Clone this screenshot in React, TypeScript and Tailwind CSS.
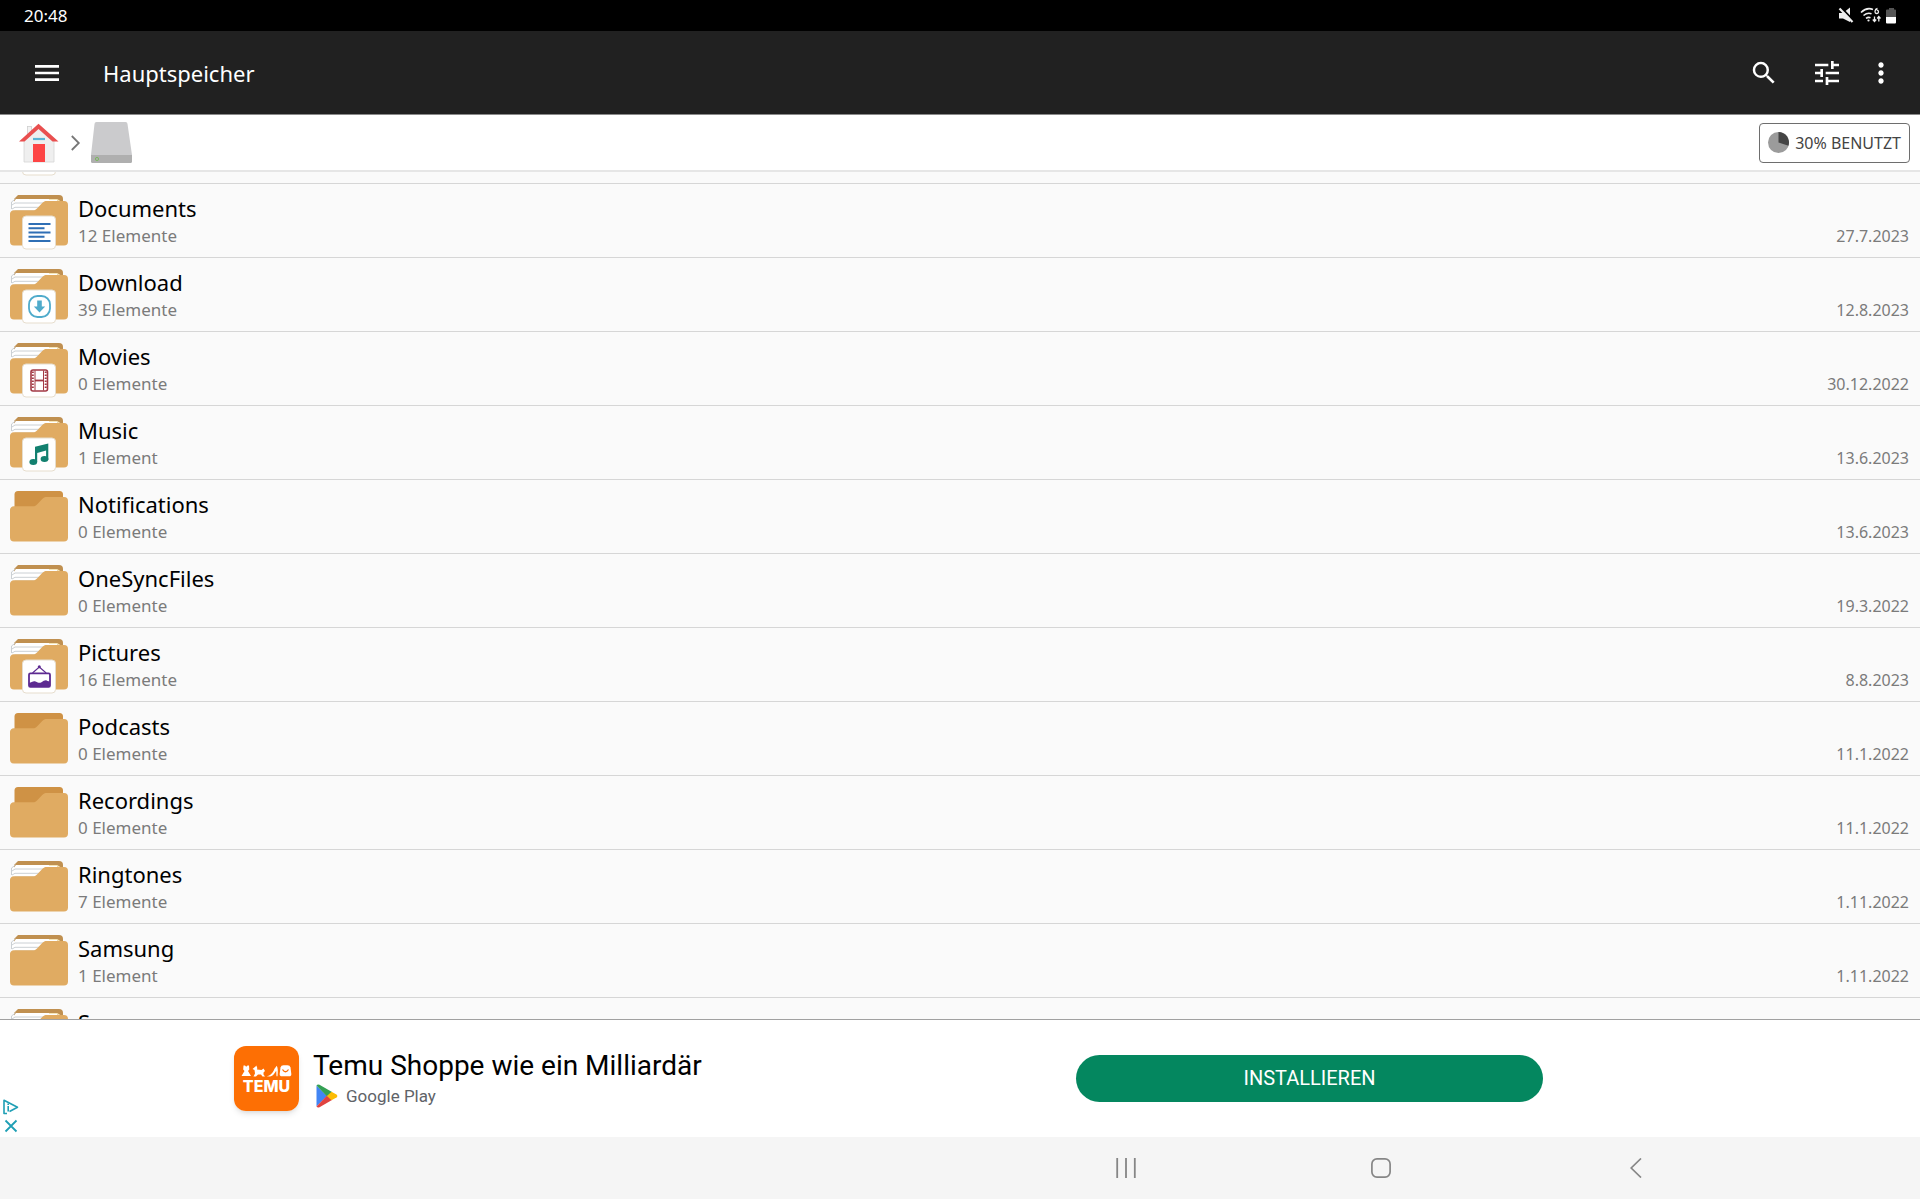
import { ReactNode } from 'react'
import { MdMenu, MdMoreVert, MdSearch, MdTune } from 'react-icons/md'

type Badge = 'documents' | 'download' | 'movies' | 'music' | 'pictures' | 'blank'

type Folder = {
  name: string
  count: string
  date: string
  filled?: boolean
  badge?: Badge
}

const folders: Folder[] = [
  { name: '', count: '', date: '', filled: true, badge: 'blank' },
  { name: 'Documents', count: '12 Elemente', date: '27.7.2023', filled: true, badge: 'documents' },
  { name: 'Download', count: '39 Elemente', date: '12.8.2023', filled: true, badge: 'download' },
  { name: 'Movies', count: '0 Elemente', date: '30.12.2022', filled: true, badge: 'movies' },
  { name: 'Music', count: '1 Element', date: '13.6.2023', filled: true, badge: 'music' },
  { name: 'Notifications', count: '0 Elemente', date: '13.6.2023' },
  { name: 'OneSyncFiles', count: '0 Elemente', date: '19.3.2022', filled: true },
  { name: 'Pictures', count: '16 Elemente', date: '8.8.2023', filled: true, badge: 'pictures' },
  { name: 'Podcasts', count: '0 Elemente', date: '11.1.2022' },
  { name: 'Recordings', count: '0 Elemente', date: '11.1.2022' },
  { name: 'Ringtones', count: '7 Elemente', date: '1.11.2022', filled: true },
  { name: 'Samsung', count: '1 Element', date: '1.11.2022', filled: true },
  { name: 'S', count: '', date: '', filled: true },
]

// drawn inside a 34x34 card
const badges: Record<Badge, ReactNode> = {
  blank: null,
  documents: (
    <path
      d="M6.5 8.500h22M6.500 12.700h16M6.500 17h22M6.500 21.200h16M6.500 25.500h22"
      stroke="#2f6fb5"
      strokeWidth="1.9"
    />
  ),
  download: (
    <g>
      <rect x="7" y="6.5" width="21" height="21" rx="8.5" fill="none" stroke="#4fabcb" strokeWidth="1.8" />
      <path d="M15.2 11h4.600v6h3.400L17.500 23l-5.700-6h3.400z" fill="#4fabcb" />
    </g>
  ),
  movies: (
    <g fill="none" stroke="#a33a45">
      <rect x="9" y="6.5" width="16.500" height="21" rx="2" strokeWidth="1.6" />
      <path d="M13 7v20M21.500 7v20" strokeWidth="1" />
      <path d="M13 17h9" strokeWidth="1.8" />
      <path d="M10.800 8v18M23.700 8v18" strokeWidth="2" strokeDasharray="1.4 1.6" />
    </g>
  ),
  music: (
    <g fill="#12806f">
      <path d="M13 9.200 26.300 6v16.500h-2.200v-9.500l-8.900 2.500v9H13z" />
      <ellipse cx="11.300" cy="24.500" rx="3.900" ry="3" />
      <ellipse cx="22.500" cy="21.500" rx="3.900" ry="3" />
    </g>
  ),
  pictures: (
    <g>
      <path d="M10.500 13.500 17.300 7.500l6.900 6" fill="none" stroke="#5d2a91" strokeWidth="1.1" />
      <circle cx="17.300" cy="7.200" r="1.500" fill="#5d2a91" />
      <rect x="7" y="13.800" width="21" height="13.500" rx="1.400" fill="none" stroke="#5d2a91" strokeWidth="1.8" />
      <path d="M7 23.500c2.500-.4 4-2.400 6.500-1.600 2.600.9 3.500 2.200 6 .8 2.200-1.300 4.500-2.700 6-1.200l2.500.5v5.300H7z" fill="#5d2a91" />
    </g>
  ),
}

function FolderIcon({ filled, badge }: { filled?: boolean; badge?: Badge }) {
  return (
    <svg width="58" height="51" viewBox="0 0 58 51" className="overflow-visible shrink-0" aria-hidden="true">
      {filled ? (
        <g>
          <path d="M8 0h41a4 4 0 0 1 4 4v6H4V4z" fill="#c09050" />
          <path d="M6 4h40l4 4v28H2V9z" fill="#fff" />
          <path
            d="M1.500 14V7l4-3M2 10l3-2h33M2 14l3-1.700h29M5 16h22"
            fill="none"
            stroke="#cbd0d4"
            strokeWidth="1"
          />
          <path d="M39 4.500h8l3 2" fill="none" stroke="#f5e6b8" strokeWidth="1.2" />
        </g>
      ) : (
        <path d="M8 0h41.500A3.500 3.500 0 0 1 53 3.500V20H4.500V3.500A3.500 3.500 0 0 1 8 0z" fill="#cf9245" />
      )}
      <path
        d="M4 15.300h19c2 0 3-.8 4.500-2.300l4.500-4.800c1.500-1.600 2.800-2.200 5-2.200h17a4 4 0 0 1 4 4v36.500a4 4 0 0 1-4 4H4a4 4 0 0 1-4-4V19a3.700 3.700 0 0 1 4-3.700z"
        fill="#e0ab62"
      />
      {badge && (
        <g transform="translate(12 20.500)">
          <rect x=".5" y=".5" width="33" height="33" rx="3.5" fill="#fff" stroke="#e6ddcd" />
          {badges[badge]}
        </g>
      )}
    </svg>
  )
}

function StatusBar() {
  return (
    <div className="flex h-[31px] shrink-0 items-center justify-between bg-black px-6 text-white">
      <span className="text-[17px] leading-6">20:48</span>
      <svg width="58" height="18" viewBox="0 0 58 18" aria-hidden="true">
        <path d="M1 6h4L12 .5v14.500L5 11.500H1z" fill="#eee" />
        <path d="M2.500 0 16 14" stroke="#000" strokeWidth="2" />
        <path d="m1.500 1.500 13 13.500" stroke="#eee" strokeWidth="2.2" />
        <g fill="none" stroke="#eee" strokeWidth="1.6">
          <path d="M23 5.500c4-4 8.500-4.500 12-3" />
          <path d="M25.500 8.500c3-2.500 5.500-2.800 8-1.800" />
          <path d="M28 11.300c1.500-1 3-1.200 4.500-.5" />
          <path d="M39.500 1.500c-3 .5-3.300 5-.8 5s2.300-3.300 0-3.300" strokeWidth="1.3" />
          <path d="M36.500 9.500v5M34.800 12.500l1.700 2 1.700-2M40.800 14.500v-5M39.200 11.500l1.600-2 1.700 2" strokeWidth="1.3" />
        </g>
        <circle cx="30.500" cy="13.500" r="1.100" fill="#eee" />
        <path d="M48 3.500a1 1 0 0 1 1-1h2V1h5v1.500h1a1 1 0 0 1 1 1V10H48z" fill="#555" />
        <path d="M48 10h10v5.500a1 1 0 0 1-1 1h-8a1 1 0 0 1-1-1z" fill="#fff" />
      </svg>
    </div>
  )
}

function AppBar() {
  return (
    <header className="flex h-[84px] shrink-0 items-center border-b border-[#8a8a8a] bg-[#212121] pl-[31px] pr-[23px] text-white">
      <button aria-label="Menü">
        <MdMenu className="size-8" />
      </button>
      <h1 className="ml-10 grow text-[22px] leading-[30px]">Hauptspeicher</h1>
      <button aria-label="Suchen">
        <MdSearch className="size-[30px]" />
      </button>
      <button aria-label="Ansicht" className="ml-8">
        <MdTune className="size-8" />
      </button>
      <button aria-label="Mehr" className="ml-[22px]">
        <MdMoreVert className="size-8" />
      </button>
    </header>
  )
}

function Breadcrumbs() {
  return (
    <nav className="flex h-[57px] shrink-0 items-center border-b-2 border-[#e6e6e6] bg-white pl-[19px] pr-[10px]">
      <a href="#start" aria-label="Startseite">
        <svg width="40" height="40" viewBox="0 0 40 40">
          <rect x="8.5" y="3.5" width="4" height="12" fill="#f3f3f3" stroke="#cfcfcf" strokeWidth=".8" />
          <path d="M19.500 4 35 18v21H5V18z" fill="#efefef" stroke="#d5d5d5" strokeWidth=".8" />
          <path d="M0 18.500 19.500.8l20 17.700h-6L19.500 6l-14 12.500z" fill="#e94f4f" />
          <path d="M14 16h12" stroke="#5bb5d6" strokeWidth="2.2" />
          <rect x="14" y="21" width="12" height="18" fill="#fd4545" />
        </svg>
      </a>
      <svg width="9" height="16" viewBox="0 0 9 16" className="ml-3 overflow-visible" aria-hidden="true">
        <path d="m.8 1 7 7-7 7" fill="none" stroke="#777" strokeWidth="1.8" />
      </svg>
      <a href="#speicher" aria-label="Hauptspeicher" className="ml-[11px]">
        <svg width="41" height="41" viewBox="0 0 41 41">
          <path d="M5.500 0h29a2 2 0 0 1 2 2L41 33H0L3.500 2a2 2 0 0 1 2-2z" fill="#cbcbcd" />
          <path d="M0 33h41v6.500a1.500 1.500 0 0 1-1.500 1.500h-38A1.500 1.500 0 0 1 0 39.500z" fill="#afafaf" />
          <circle cx="6" cy="37" r="1.6" fill="none" stroke="#7cb860" strokeWidth="1" />
        </svg>
      </a>
      <button className="ml-auto flex h-10 items-center gap-1.5 rounded border border-[#6e6e6e] px-2 text-base leading-6 text-[#444]">
        <svg width="21" height="21" viewBox="0 0 21 21" aria-hidden="true">
          <circle cx="10.5" cy="10.5" r="10.5" fill="#9b9b9b" />
          <path d="M10.500 10.500V0a10.500 10.500 0 0 1 10 13.700z" fill="#444" />
        </svg>
        30% BENUTZT
      </button>
    </nav>
  )
}

function FolderRow({ folder }: { folder: Folder }) {
  return (
    <li className="h-[74px] border-b border-[#d6d6d6]">
      <button className="flex size-full items-center pl-2.5 pr-[11px] text-left">
        <FolderIcon filled={folder.filled} badge={folder.badge} />
        <span className="ml-2.5 flex h-14 grow flex-col">
          <span className="text-[22px] leading-[30px] text-black">{folder.name}</span>
          <span className="flex justify-between leading-[26px] text-[#7b7b7b]">
            <span className="text-[17px]">{folder.count}</span>
            <span className="text-[16px]">{folder.date}</span>
          </span>
        </span>
      </button>
    </li>
  )
}

function TemuLogo() {
  return (
    <svg width="65" height="65" viewBox="0 0 65 65" className="shrink-0 rounded-xl shadow-md" aria-hidden="true">
      <rect width="65" height="65" fill="#fd6f04" />
      <g fill="#fff">
        <path d="M9.500 19.500H11l1.200 1.200 1.300-1.200H15l.3 4-1.300 1.500 3 5H7.500l3-5-1.300-1.500z" />
        <path d="m18.500 23 3-2.500.8-1 1 2.500-.3 1.500 4.500.5 2-1.500 1.500 2.500-1.500 1.500v2l1.500 2h-2.500L27 28.500h-3l-2 2h-2.500l1.500-3-.5-3.500z" />
        <path d="M32.500 30.300c4-.5 6.500-3.500 8-7.500l2.300-3c1.200 2.500 1.200 5.500.7 10.500h-1l-.3-5.500c-2 3.500-4 5.700-6.200 5.700z" />
        <path d="M46.500 21.500q.5-2.200 3-2.200h4q2.500 0 3 2.200l.8 6.500q.2 2.300-2.300 2.300h-7q-2.500 0-2.300-2.300z" />
      </g>
      <path d="M48.500 23.500q3 4.500 6 0" fill="none" stroke="#fd6f04" strokeWidth="1.3" />
      <text
        x="32.5"
        y="46"
        textAnchor="middle"
        fill="#fff"
        className="font-['Inter'] text-[16px] font-extrabold"
      >
        TEMU
      </text>
    </svg>
  )
}

function AdBanner() {
  return (
    <aside className="relative flex h-[118px] shrink-0 items-center border-t border-[#a0a0a0] bg-white pl-[234px] pr-[377px] font-['Roboto',sans-serif]">
      <TemuLogo />
      <div className="ml-3.5 grow pb-0.5">
        <p className="text-[28px] leading-9 text-black">Temu Shoppe wie ein Milliardär</p>
        <div className="flex items-center gap-2 pl-[3px]">
          <svg width="22" height="24" viewBox="0 0 22 24" aria-hidden="true">
            <path d="M.5 1.500v21L11 12z" fill="#4285f4" />
            <path d="M.5 1.500Q1.500 0 3.500.8L16 8l-5 4.500z" fill="#34a053" />
            <path d="M.5 22.500q1 1.500 3 .7L16 16l-5-4.500z" fill="#e04340" />
            <path d="m15.500 7.700 5 2.800q1.700 1.500 0 3l-5 2.800L11 12z" fill="#fbbc04" />
          </svg>
          <span className="text-[17px] leading-6 text-[#5f6368]">Google Play</span>
        </div>
      </div>
      <button className="h-[47px] w-[467px] rounded-full bg-[#04875f] pb-0.5 text-xl text-white">
        INSTALLIEREN
      </button>
      <div className="absolute bottom-1 left-[3px] flex flex-col gap-1">
        <button aria-label="Anzeigeninfo">
          <svg width="16" height="16" viewBox="0 0 16 16" fill="none" stroke="#1f9fb5" strokeWidth="1.6">
            <path d="M4 14.500H1V1.200l13.500 7-8 4.300" strokeLinejoin="round" />
            <path d="M5.200 7v5.500M5.200 4.500v1.400" />
          </svg>
        </button>
        <button aria-label="Anzeige schließen">
          <svg width="16" height="14" viewBox="0 0 16 14" stroke="#1f9fb5" strokeWidth="1.8">
            <path d="m2.500 1.500 11 11M13.500 1.500l-11 11" />
          </svg>
        </button>
      </div>
    </aside>
  )
}

function SystemNav() {
  return (
    <nav className="flex h-[62px] shrink-0 items-stretch justify-end bg-[#f5f5f5] pr-[157px]">
      <button aria-label="Letzte Apps" className="flex w-[255px] items-center justify-center">
        <svg width="20" height="20" viewBox="0 0 20 20" stroke="#868686" strokeWidth="1.8">
          <path d="M1.200 0v20M10 0v20M18.800 0v20" />
        </svg>
      </button>
      <button aria-label="Startbildschirm" className="flex w-[255px] items-center justify-center">
        <svg width="20" height="20" viewBox="0 0 20 20" fill="none" stroke="#868686" strokeWidth="1.7">
          <rect x=".9" y=".9" width="18.2" height="18.2" rx="5" />
        </svg>
      </button>
      <button aria-label="Zurück" className="flex w-[255px] items-center justify-center">
        <svg width="12" height="20" viewBox="0 0 12 20" fill="none" stroke="#868686" strokeWidth="1.7">
          <path d="M11 .5 1.200 10l9.800 9.500" />
        </svg>
      </button>
    </nav>
  )
}

export default function App() {
  return (
    <div className="flex h-screen flex-col bg-[#fafafa] font-['Noto_Sans',sans-serif]">
      <StatusBar />
      <AppBar />
      <Breadcrumbs />
      <main className="min-h-0 grow overflow-hidden">
        {/* list is scrolled down, only the foot of the first row shows */}
        <ul className="-mt-[62px]">
          {folders.map((folder, i) => (
            <FolderRow key={i} folder={folder} />
          ))}
        </ul>
      </main>
      <AdBanner />
      <SystemNav />
    </div>
  )
}
